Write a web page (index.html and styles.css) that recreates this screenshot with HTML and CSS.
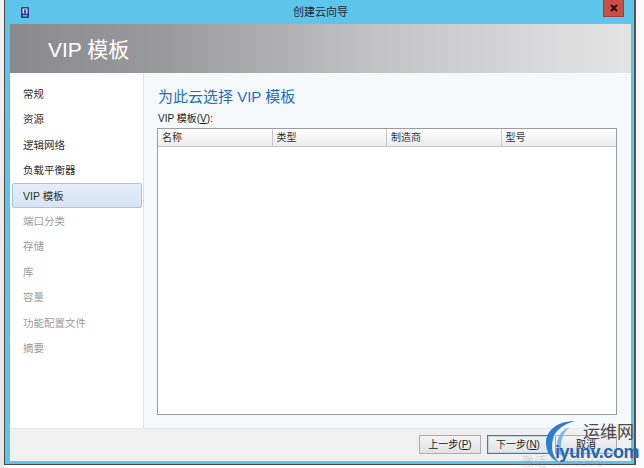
FILE: index.html
```html
<!DOCTYPE html>
<html lang="zh">
<head>
<meta charset="utf-8">
<title>创建云向导</title>
<link rel="stylesheet" href="styles.css">
</head>
<body>
<div class="screen">
  <div class="desk-left"></div>
  <div class="window">
    <div class="titlebar">
      <div class="tb-left">
        <svg class="app-icon" width="8" height="11" viewBox="0 0 8 11"><rect x="0" y="0" width="8" height="11" rx="1" fill="#2c3e8c"/><rect x="1.5" y="1.5" width="5" height="5" fill="#d8dcf0"/><rect x="3" y="2.5" width="2" height="4" fill="#3a4fa8"/><rect x="2" y="8" width="4" height="1.5" fill="#8fa0e0"/></svg>
      </div>
      <div class="tb-title">创建云向导</div>
      <div class="tb-right">
        <div class="close-btn">
          <svg width="8" height="8" viewBox="0 0 8 8"><path d="M1 1 L7 7 M7 1 L1 7" stroke="#2a1210" stroke-width="2"/></svg>
        </div>
      </div>
    </div>
    <div class="client">
      <div class="banner">VIP 模板</div>
      <div class="middle">
        <nav class="nav">
          <div class="nav-item">常规</div>
          <div class="nav-item">资源</div>
          <div class="nav-item">逻辑网络</div>
          <div class="nav-item">负载平衡器</div>
          <div class="nav-item selected">VIP 模板</div>
          <div class="nav-item disabled">端口分类</div>
          <div class="nav-item disabled">存储</div>
          <div class="nav-item disabled">库</div>
          <div class="nav-item disabled">容量</div>
          <div class="nav-item disabled">功能配置文件</div>
          <div class="nav-item disabled">摘要</div>
        </nav>
        <main class="content">
          <h1 class="page-title">为此云选择 VIP 模板</h1>
          <div class="field-label">VIP 模板(<u>V</u>):</div>
          <div class="grid">
            <div class="grid-head">
              <div class="col">名称</div>
              <div class="col">类型</div>
              <div class="col">制造商</div>
              <div class="col last">型号</div>
            </div>
            <div class="grid-body"></div>
          </div>
        </main>
      </div>
      <div class="footer">
        <button class="btn">上一步(<u>P</u>)</button>
        <button class="btn default">下一步(<u>N</u>)</button>
        <button class="btn">取消</button>
      </div>
    </div>
  </div>
  <div class="desk-right"></div>
</div>
<div class="watermark">
  <div class="wm-act">激活 Windows</div>
  <svg class="wm-arc" width="36" height="46" viewBox="0 0 36 46"><path d="M32 3 C15 3 3 12 3 25 C3 35 9 41 15 44 C9 37 8 29 10 21 C12 12 21 6 32 3 Z" fill="#2a7fd0"/><path d="M27 9 C18 12 14 19 14 27 C14 33 17 37 21 40 C18 34 17 27 19 21 C20 16 23 12 27 9 Z" fill="#7ab8ec"/></svg>
  <div class="wm-cn">运维网</div>
  <div class="wm-en">iyunv.com</div>
</div>
</body>
</html>
```

FILE: styles.css
```css
* { box-sizing: border-box; }
html, body {
  margin: 0;
  padding: 0;
  width: 644px;
  height: 468px;
  overflow: hidden;
  background: #ffffff;
  font-family: "Liberation Sans", "Noto Sans CJK SC", sans-serif;
  color: #333;
}
.screen {
  display: flex;
  width: 644px;
  height: 468px;
}
.desk-left {
  width: 4px;
  background: linear-gradient(#f2f2f2, #e8e8e8);
}
.desk-right {
  flex: 1;
  background: #fafafa;
}
.window {
  width: 632px;
  height: 465px;
  border: 1px solid #4a4a4a;
  border-top: none;
  border-right: 2px solid #555;
  background: #5ec5ea;
  padding: 0 3px 3px 5px;
  display: flex;
  flex-direction: column;
}
.titlebar {
  height: 24px;
  display: grid;
  grid-template-columns: 1fr auto 1fr;
  align-items: start;
}
.tb-left {
  padding: 7px 0 0 11px;
}
.app-icon { display: block; }
.tb-title {
  font-size: 11px;
  line-height: 24px;
  color: #1a2a3a;
}
.tb-right {
  display: flex;
  justify-content: flex-end;
  padding-right: 7px;
}
.close-btn {
  width: 21px;
  height: 17px;
  background: #c74f46;
  border: 1px solid #9e3d36;
  border-top: none;
  display: flex;
  align-items: center;
  justify-content: center;
}
.client {
  flex: 1;
  display: flex;
  flex-direction: column;
  background: #f0f0f0;
}
.banner {
  height: 49px;
  background: linear-gradient(90deg, #8a8a8d 0%, #9a9a9c 25%, #c4c4c6 60%, #e4e4e5 100%);
  color: #ffffff;
  font-size: 21px;
  padding-left: 38px;
  line-height: 51px;
}
.middle {
  height: 355px;
  display: flex;
}
.nav {
  width: 136px;
  background: #ffffff;
  border-right: 1px solid #e0e0e0;
  padding: 8px 1px 0 2px;
  display: flex;
  flex-direction: column;
}
.nav-item {
  height: 25.4px;
  line-height: 24px;
  font-size: 10.5px;
  padding-left: 10px;
  color: #2e2e2e;
  border: 1px solid transparent;
}
.nav-item.selected {
  background: linear-gradient(#e4eefa, #d6e4f5);
  border-color: #a9c3e4;
  border-radius: 2px;
}
.nav-item.disabled {
  color: #9a9a9a;
}
.content {
  flex: 1;
  background: #f6f9fc;
  padding: 14px 14px 13px 13px;
  display: flex;
  flex-direction: column;
}
.page-title {
  margin: 0 0 5px 1px;
  font-size: 15px;
  line-height: 20px;
  font-weight: normal;
  color: #1f6dbd;
}
.field-label {
  font-size: 10px;
  line-height: 14px;
  margin: 0 0 2px 1px;
  color: #222;
}
.grid {
  flex: 1;
  border: 1px solid #9c9c9c;
  background: #ffffff;
  display: flex;
  flex-direction: column;
}
.grid-head {
  height: 18px;
  display: flex;
  background: linear-gradient(#ffffff, #ececec);
  border-bottom: 1px solid #c4c4c4;
}
.col {
  width: 114.5px;
  border-right: 1px solid #c8c8c8;
  font-size: 10px;
  line-height: 17px;
  padding-left: 4px;
  color: #333;
}
.col.last {
  flex: 1;
  border-right: none;
}
.grid-body { flex: 1; }
.footer {
  flex: 1;
  display: flex;
  justify-content: flex-end;
  align-items: center;
  gap: 6px;
  padding: 0 14px 1px 0;
  background: #f0f0f0;
  border-top: 1px solid #e6e6e6;
}
.btn {
  width: 62px;
  height: 19px;
  font-family: "Liberation Sans", "Noto Sans CJK SC", sans-serif;
  font-size: 10px;
  line-height: 17px;
  padding: 0;
  color: #222;
  background: linear-gradient(#f4f4f4, #e2e2e2);
  border: 1px solid #adadad;
}
.btn.default {
  border-color: #3d7bb8;
  box-shadow: inset 0 0 0 1px #bcd6ef;
}
.watermark {
  position: absolute;
  left: 543px;
  top: 416px;
  width: 101px;
  height: 52px;
}
.wm-arc {
  position: absolute;
  left: 0;
  top: 2px;
}
.wm-cn {
  position: absolute;
  left: 40px;
  top: 4px;
  font-size: 17px;
  line-height: 22px;
  color: #4a4a4a;
  font-family: "Noto Sans CJK SC", sans-serif;
}
.wm-en {
  position: absolute;
  left: 12px;
  top: 25px;
  font-size: 18px;
  line-height: 22px;
  font-weight: bold;
  color: #2466b0;
  letter-spacing: -0.4px;
}
.wm-act {
  position: absolute;
  left: -22px;
  top: 39px;
  font-size: 13px;
  line-height: 14px;
  color: rgba(140,140,140,0.3);
}
```
